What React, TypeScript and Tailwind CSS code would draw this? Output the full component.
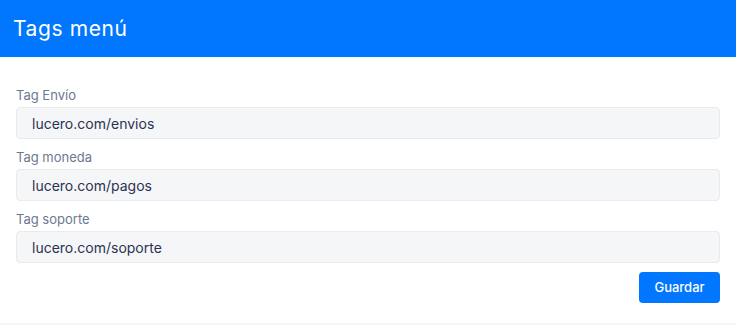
const fields = [
  { label: 'Tag Envío', value: 'lucero.com/envios' },
  { label: 'Tag moneda', value: 'lucero.com/pagos' },
  { label: 'Tag soporte', value: 'lucero.com/soporte' },
];

export default function App() {
  return (
    <div className="min-h-screen bg-[#f3f5f8]" style={{ fontFamily: 'Inter, "Noto Sans", sans-serif' }}>
      <div className="bg-white">
        {/* Header */}
        <div className="h-[57px] bg-[#0077fe] px-[13px] flex items-center">
          <h1 className="text-white text-[21px] font-normal tracking-[0.6px]">Tags menú</h1>
        </div>

        {/* Form */}
        <div className="px-4 pt-[29px] pb-[20px]">
          {fields.map((f) => (
            <div key={f.label} className="mb-[9px] last:mb-0">
              <label className="block text-[13px] leading-[18px] text-[#6b7891] mb-[3px]">{f.label}</label>
              <input
                readOnly
                value={f.value}
                className="block w-full h-[32px] px-[15px] rounded-[4px] bg-[#f5f6f8] border border-[#e8eaee] text-[14px] text-[#2b3352] outline-none"
              />
            </div>
          ))}
          <div className="flex justify-end mt-[8px]">
            <button className="block h-[31px] w-[81px] rounded-[4px] bg-[#0077fe] text-white text-[13px] font-medium">
              Guardar
            </button>
          </div>
        </div>
      </div>
    </div>
  );
}
